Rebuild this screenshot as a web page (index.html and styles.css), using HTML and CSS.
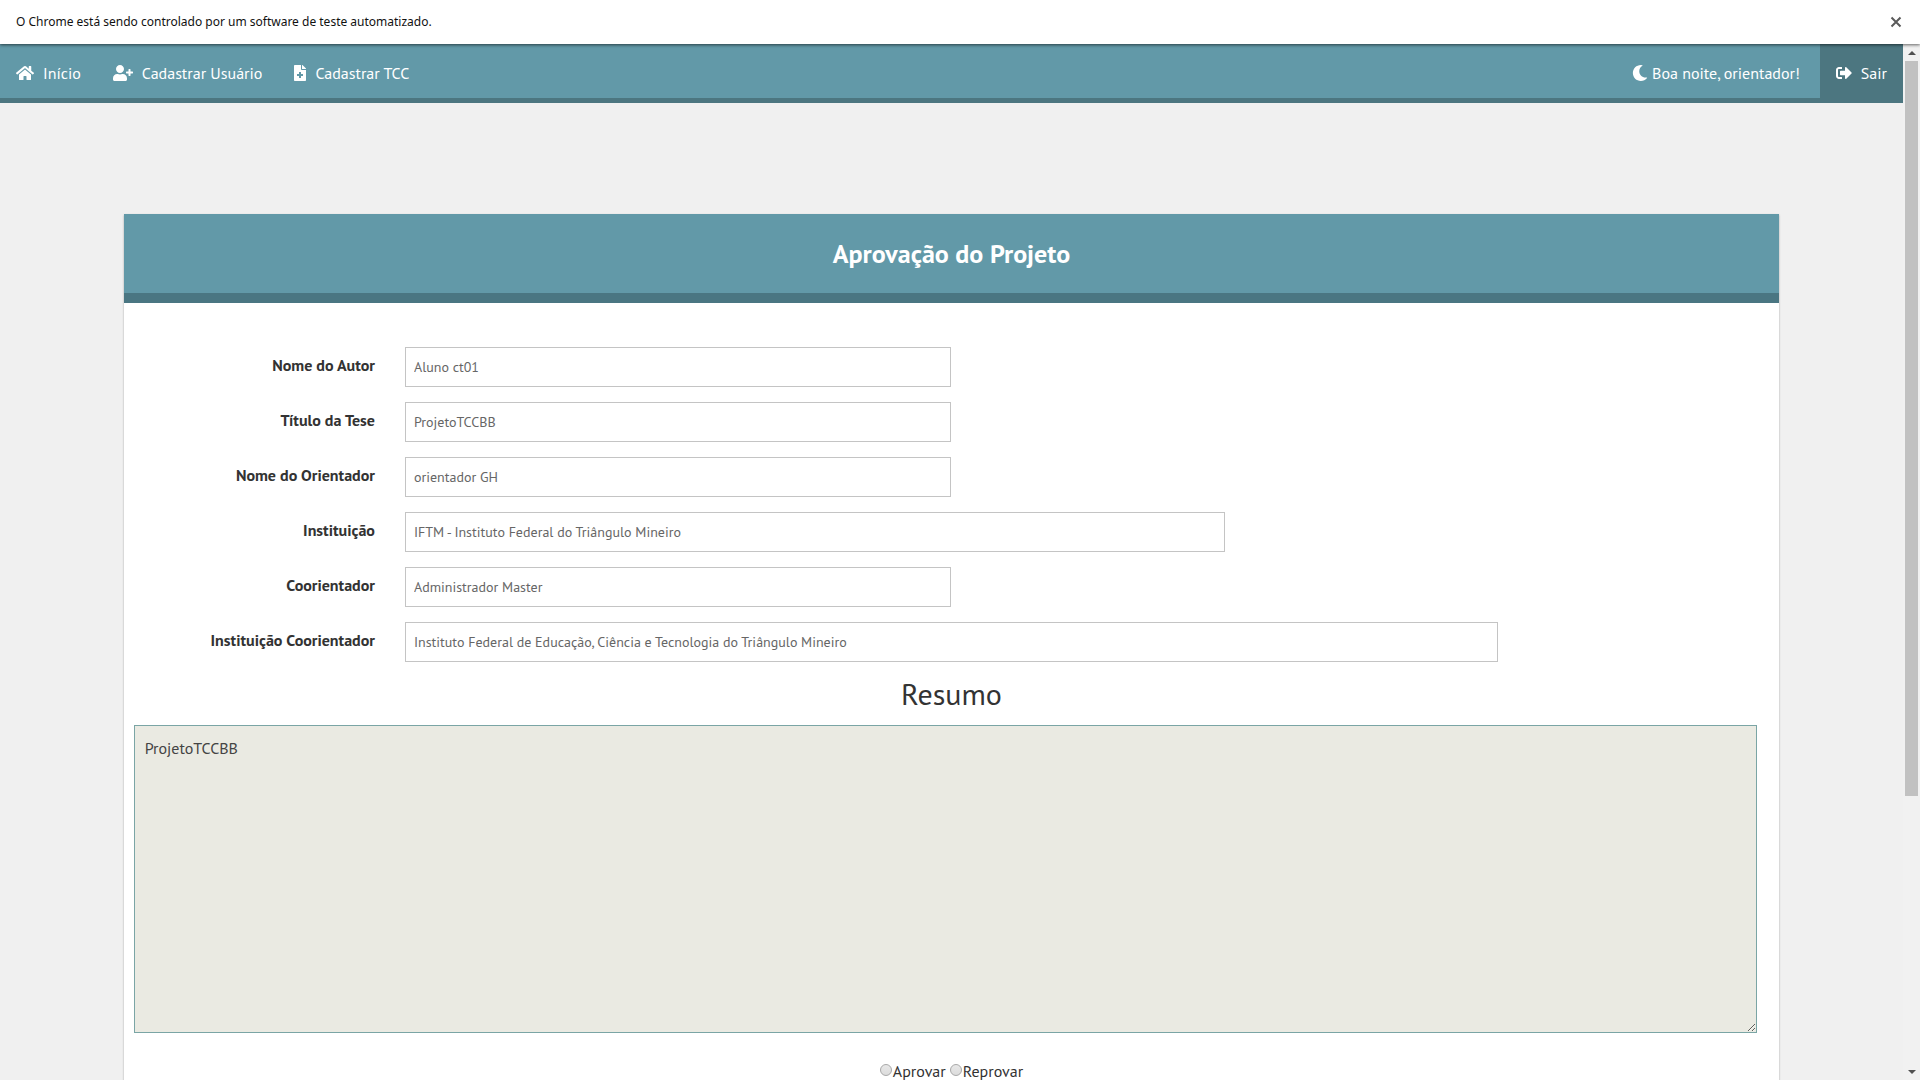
FILE: index.html
```html
<!DOCTYPE html>
<html lang="pt-BR">
<head>
<meta charset="utf-8">
<meta name="viewport" content="width=device-width, initial-scale=1">
<title>Aprovação do Projeto</title>
<link rel="stylesheet" href="styles.css">
</head>
<body>
<div class="infobar">
  <span>O Chrome está sendo controlado por um software de teste automatizado.</span>
  <button class="infobar-close" type="button" aria-label="Fechar">
    <svg width="12" height="12" viewBox="0 0 12 12"><path d="M1.500 1.500l9 9M10.500 1.500l-9 9" fill="none" stroke="#5a5a5a" stroke-width="2"/></svg>
  </button>
</div>
<div class="window">
  <div class="page">
    <nav class="navbar">
      <a class="nav-link" href="#">
        <svg class="icon" width="18" height="16" viewBox="0 0 576 512"><path d="M280.37 148.26L96 300.11V464a16 16 0 0 0 16 16l112.06-.29a16 16 0 0 0 15.92-16V368a16 16 0 0 1 16-16h64a16 16 0 0 1 16 16v95.64a16 16 0 0 0 16 16.05L464 480a16 16 0 0 0 16-16V300L295.67 148.26a12.19 12.19 0 0 0-15.3 0zM571.6 251.47L488 182.56V44.05a12 12 0 0 0-12-12h-56a12 12 0 0 0-12 12v72.61L318.47 43a48 48 0 0 0-61 0L4.34 251.47a12 12 0 0 0-1.6 16.9l25.5 31A12 12 0 0 0 45.15 301l235.22-193.74a12.19 12.19 0 0 1 15.3 0L530.9 301a12 12 0 0 0 16.9-1.6l25.5-31a12 12 0 0 0-1.7-16.93z"/></svg>
        <span>Início</span>
      </a>
      <a class="nav-link" href="#">
        <svg class="icon" width="20" height="16" viewBox="0 0 640 512"><path d="M624 208h-64v-64c0-8.800-7.200-16-16-16h-32c-8.800 0-16 7.200-16 16v64h-64c-8.800 0-16 7.200-16 16v32c0 8.800 7.200 16 16 16h64v64c0 8.800 7.200 16 16 16h32c8.800 0 16-7.200 16-16v-64h64c8.800 0 16-7.200 16-16v-32c0-8.800-7.200-16-16-16zm-400 48c70.700 0 128-57.300 128-128S294.700 0 224 0 96 57.300 96 128s57.300 128 128 128zm89.600 32h-16.700c-22.200 10.200-46.900 16-72.900 16s-50.600-5.800-72.900-16h-16.700C60.200 288 0 348.200 0 422.400V464c0 26.500 21.500 48 48 48h352c26.500 0 48-21.500 48-48v-41.600c0-74.200-60.200-134.400-134.400-134.400z"/></svg>
        <span>Cadastrar Usuário</span>
      </a>
      <a class="nav-link" href="#">
        <svg class="icon" width="12" height="16" viewBox="0 0 384 512"><path d="M224 136V0H24C10.700 0 0 10.700 0 24v464c0 13.300 10.700 24 24 24h336c13.300 0 24-10.700 24-24V160H248c-13.200 0-24-10.800-24-24zm64 160v48c0 4.400-3.600 8-8 8h-56v56c0 4.400-3.600 8-8 8h-48c-4.400 0-8-3.600-8-8v-56h-56c-4.400 0-8-3.600-8-8v-48c0-4.400 3.600-8 8-8h56v-56c0-4.400 3.600-8 8-8h48c4.400 0 8 3.600 8 8v56h56c4.400 0 8 3.600 8 8zm96-174.100v6.100H256V0h6.100c6.400 0 12.500 2.500 17 7l97.900 98c4.500 4.500 7 10.600 7 16.900z"/></svg>
        <span>Cadastrar TCC</span>
      </a>
      <span class="greeting">
        <svg class="icon" width="16" height="16" viewBox="0 0 512 512"><path d="M283.211 512c78.962 0 151.079-35.925 198.857-94.792 7.068-8.708-.639-21.430-11.562-19.350-124.203 23.654-238.262-71.576-238.262-196.954 0-72.222 38.662-138.635 101.498-174.394 9.686-5.512 7.250-20.197-3.756-22.230A258.156 258.156 0 0 0 283.211 0c-141.309 0-256 114.511-256 256 0 141.309 114.511 256 256 256z"/></svg>
        <span>Boa noite, orientador!</span>
      </span>
      <a class="nav-link logout" href="#">
        <svg class="icon" width="16" height="16" viewBox="0 0 512 512"><path d="M497 273L329 441c-15 15-41 4.500-41-17v-96H152c-13.300 0-24-10.700-24-24v-96c0-13.300 10.700-24 24-24h136V88c0-21.400 25.900-32 41-17l168 168c9.300 9.400 9.300 24.600 0 34zM192 436v-40c0-6.600-5.400-12-12-12H96c-17.700 0-32-14.300-32-32V160c0-17.700 14.300-32 32-32h84c6.600 0 12-5.400 12-12V76c0-6.600-5.400-12-12-12H96c-53 0-96 43-96 96v192c0 53 43 96 96 96h84c6.600 0 12-5.400 12-12z"/></svg>
        <span>Sair</span>
      </a>
    </nav>
    <main class="card">
      <h1 class="card-title">Aprovação do Projeto</h1>
      <form class="form">
        <div class="field">
          <label for="autor">Nome do Autor</label>
          <input class="short" id="autor" type="text" value="Aluno ct01">
        </div>
        <div class="field">
          <label for="titulo">Título da Tese</label>
          <input class="short" id="titulo" type="text" value="ProjetoTCCBB">
        </div>
        <div class="field">
          <label for="orientador">Nome do Orientador</label>
          <input class="short" id="orientador" type="text" value="orientador GH">
        </div>
        <div class="field">
          <label for="instituicao">Instituição</label>
          <input class="medium" id="instituicao" type="text" value="IFTM - Instituto Federal do Triângulo Mineiro">
        </div>
        <div class="field">
          <label for="coorientador">Coorientador</label>
          <input class="short" id="coorientador" type="text" value="Administrador Master">
        </div>
        <div class="field">
          <label for="inst-coorientador">Instituição Coorientador</label>
          <input class="long" id="inst-coorientador" type="text" value="Instituto Federal de Educação, Ciência e Tecnologia do Triângulo Mineiro">
        </div>
        <label class="summary-title" for="resumo">Resumo</label>
        <textarea class="summary" id="resumo">ProjetoTCCBB</textarea>
        <div class="decision">
          <label><input type="radio" name="decisao" value="aprovar">Aprovar</label>
          <label><input type="radio" name="decisao" value="reprovar">Reprovar</label>
        </div>
      </form>
    </main>
  </div>
  <div class="scrollbar" aria-hidden="true">
    <span class="arrow arrow-up"></span>
    <div class="track"><div class="thumb"></div></div>
    <span class="arrow arrow-down"></span>
  </div>
</div>
</body>
</html>
```
FILE: styles.css
```css
* {
  box-sizing: border-box;
}

body {
  margin: 0;
  height: 100vh;
  display: flex;
  flex-direction: column;
  overflow: hidden;
  background: #f0f0f0;
  color: #333;
  font-family: "PT Sans", "Open Sans", "Noto Sans", sans-serif;
  font-size: 16px;
  line-height: 20px;
}

input,
textarea,
button {
  font-family: inherit;
}

/* Browser notice */
.infobar {
  position: relative;
  z-index: 1;
  flex: none;
  display: flex;
  align-items: center;
  justify-content: space-between;
  height: 44px;
  padding: 0 16px;
  background: #fff;
  color: #111;
  font-family: "Segoe UI", "Noto Sans", sans-serif;
  font-size: 12px;
  box-shadow: 0 1px 3px rgba(0, 0, 0, 0.6);
}

.infobar-close {
  display: flex;
  padding: 2px;
  border: 0;
  background: none;
}

.window {
  flex: 1;
  min-height: 0;
  display: flex;
}

.page {
  flex: 1;
  min-width: 0;
  overflow: hidden;
}

/* Navigation */
.navbar {
  display: flex;
  height: 59px;
  border-bottom: 5px solid #4c7680;
  background: #6299a8;
  color: #fff;
}

.nav-link {
  display: flex;
  align-items: center;
  gap: 9px;
  padding: 4px 16px 0;
  color: #fff;
  text-decoration: none;
}

.greeting {
  display: flex;
  align-items: center;
  gap: 4px;
  margin-left: auto;
  padding: 4px 20px 0;
}

.logout {
  background: #4c7680;
}

.icon {
  flex: none;
  fill: #fff;
}

/* Form card */
.card {
  width: 87%;
  margin: 111px auto 0;
  background: #fff;
  box-shadow: 0 1px 2px rgba(0, 0, 0, 0.3);
}

.card-title {
  margin: 0;
  padding: 24px 0;
  border-bottom: 10px solid #4a7682;
  background: #6299a8;
  color: #fff;
  font-size: 26px;
  line-height: 31px;
  text-align: center;
}

.form {
  padding: 44px 8px 40px;
}

.field {
  display: flex;
  margin-bottom: 15px;
}

.field label {
  width: 16.667%;
  padding: 8px 30px 0 0;
  font-weight: 700;
  text-align: right;
}

.field input {
  height: 40px;
  padding: 0 8px;
  border: 1px solid #c4c4c4;
  background: #fff;
  color: #666;
  font-size: 14px;
}

.short {
  width: 33.333%;
}

.medium {
  width: 50%;
}

.long {
  width: 66.667%;
}

.summary-title {
  display: block;
  margin-bottom: 14px;
  font-size: 30px;
  line-height: 34px;
  text-align: center;
}

.summary {
  display: block;
  width: 99%;
  height: 308px;
  margin-left: 2px;
  padding: 12px 10px;
  border: 1px solid #7aa5a5;
  background: #eaeae2;
  color: #444;
  font-size: 16px;
  line-height: 20px;
}

.decision {
  display: flex;
  justify-content: center;
  gap: 4px;
  margin-top: 28px;
}

.decision label {
  display: flex;
  align-items: center;
}

.decision input {
  appearance: none;
  width: 12px;
  height: 12px;
  margin: 0 1px 2px 0;
  border: 1px solid #a8a8a8;
  border-radius: 50%;
  background: linear-gradient(#e8e8e8, #dcdcdc);
}

/* Window scrollbar */
.scrollbar {
  flex: none;
  display: flex;
  flex-direction: column;
  width: 17px;
  padding: 0 2px;
  background: #f1f1f1;
}

.arrow {
  height: 17px;
  display: flex;
  align-items: center;
  justify-content: center;
}

.arrow::before {
  content: "";
  border: 4px solid transparent;
}

.arrow-up::before {
  border-top: 0;
  border-bottom-color: #505050;
}

.arrow-down::before {
  border-bottom: 0;
  border-top-color: #505050;
}

.track {
  flex: 1;
}

.thumb {
  height: 73.4%;
  background: #c1c1c1;
}
```
